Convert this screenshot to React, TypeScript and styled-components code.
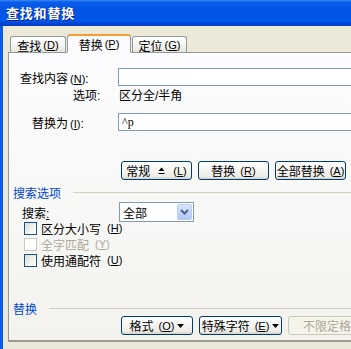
import React from 'react';
import styled, { createGlobalStyle } from 'styled-components';

const GlobalStyle = createGlobalStyle`
  html, body {
    margin: 0;
    padding: 0;
    background: #ece9d8;
    overflow: hidden;
  }
  body {
    font-family: "Liberation Sans", "Noto Sans CJK SC", sans-serif;
    font-size: 12px;
    color: #000;
  }
`;

const Window = styled.div`
  width: 351px;
  height: 349px;
  display: flex;
  flex-direction: column;
  overflow: hidden;
`;

const TitleBar = styled.div`
  height: 26px;
  flex-shrink: 0;
  display: flex;
  align-items: center;
  padding-left: 6px;
  padding-bottom: 2px;
  box-sizing: border-box;
  background: linear-gradient(
    to bottom,
    #3d8bf5 0%,
    #0a5de9 8%,
    #0054e3 40%,
    #0058ea 80%,
    #0046d2 90%,
    #003cc4 100%
  );
`;

const Title = styled.span`
  color: #fff;
  font-weight: bold;
  font-size: 13px;
  letter-spacing: 0.8px;
  text-shadow: 1px 1px 0 #0a1f8a;
`;

const Body = styled.div`
  flex: 1;
  display: flex;
  flex-direction: column;
  border-left: 3px solid #0a5ce8;
  padding: 7px 0 0 5px;
  background: #ece9d8;
`;

const TabStrip = styled.div`
  display: flex;
  align-items: flex-end;
  height: 19px;
  padding-left: 2px;
  position: relative;
  z-index: 1;
`;

const Tab = styled.div<{ $active?: boolean; $w: number }>`
  width: ${p => p.$w}px;
  height: ${p => (p.$active ? 19 : 16)}px;
  box-sizing: border-box;
  display: flex;
  align-items: center;
  justify-content: center;
  border: 1px solid #919b9c;
  border-bottom: ${p => (p.$active ? '1px solid #fcfcfe' : 'none')};
  border-top: ${p => (p.$active ? '2px solid #f0a030' : '1px solid #919b9c')};
  border-radius: 3px 3px 0 0;
  margin-left: ${p => (p.$active ? '1px' : '0')};
  margin-right: ${p => (p.$active ? '1px' : '0')};
  margin-bottom: ${p => (p.$active ? '-1px' : '0')};
  background: ${p =>
    p.$active ? '#fcfcfe' : 'linear-gradient(to bottom, #ffffff 0%, #f3f3ef 60%, #e4e3dc 100%)'};
  font-size: 12px;
  white-space: nowrap;
  padding-top: ${p => (p.$active ? '0' : '1px')};
`;

const Panel = styled.div`
  width: 420px;
  height: 290px;
  box-sizing: border-box;
  border: 1px solid #919b9c;
  border-right: none;
  border-bottom: 2px solid #9a9a92;
  background: linear-gradient(to bottom, #fcfcfe 0%, #f7f7f5 60%, #f3f2ed 100%);
  display: flex;
  flex-direction: column;
`;

const FieldRow = styled.div<{ $top: number; $indent: number }>`
  display: flex;
  align-items: center;
  margin-top: ${p => p.$top}px;
  height: 18px;
  padding-left: ${p => p.$indent}px;
`;

const Label = styled.span<{ $w: number }>`
  width: ${p => p.$w}px;
  flex-shrink: 0;
  white-space: nowrap;
`;

const TextBox = styled.div`
  flex: 1;
  height: 18px;
  box-sizing: border-box;
  border: 1px solid #7f9db9;
  border-right: none;
  background: #fff;
  padding-left: 3px;
  display: flex;
  align-items: center;
  font-family: "Liberation Serif", serif;
  font-size: 12px;
`;

const ButtonRow = styled.div<{ $top: number }>`
  display: flex;
  gap: 6px;
  margin-top: ${p => p.$top}px;
  padding-left: 112px;
`;

const Button = styled.div<{ $w: number; $disabled?: boolean }>`
  width: ${p => p.$w}px;
  height: 19px;
  flex-shrink: 0;
  box-sizing: border-box;
  display: flex;
  align-items: center;
  justify-content: center;
  gap: 3px;
  border: 1px solid ${p => (p.$disabled ? '#c9c7ba' : '#003c74')};
  border-radius: 3px;
  color: ${p => (p.$disabled ? '#aca899' : '#000')};
  background: ${p =>
    p.$disabled
      ? '#f5f4ea'
      : 'linear-gradient(to bottom, #ffffff 0%, #f5f4f0 50%, #ecebe6 85%, #d6d0c5 100%)'};
  white-space: nowrap;
  overflow: hidden;
  font-size: 12px;
`;

const MarkSlot = styled.span`
  display: flex;
  align-items: center;
  margin: 0 3px 0 5px;
`;

const SectionHead = styled.div<{ $top: number }>`
  display: flex;
  align-items: center;
  gap: 12px;
  margin-top: ${p => p.$top}px;
  padding-left: 4px;
  color: #0046d5;
  height: 16px;

  &::after {
    content: '';
    flex: 1;
    height: 1px;
    background: #d0d0bf;
  }
`;

const SearchRow = styled.div`
  display: flex;
  align-items: center;
  margin-top: 2px;
  padding-left: 13px;
  height: 20px;
`;

const Select = styled.div`
  width: 75px;
  height: 20px;
  box-sizing: border-box;
  border: 1px solid #7f9db9;
  background: #fff;
  display: flex;
  align-items: center;
  justify-content: space-between;
  padding: 1px 1px 1px 3px;
`;

const DropButton = styled.div`
  width: 15px;
  height: 16px;
  box-sizing: border-box;
  border: 1px solid #b9cbf3;
  border-radius: 2px;
  background: linear-gradient(to bottom, #d8e4fd 0%, #c1d3fb 60%, #b2c7f7 100%);
  display: flex;
  align-items: center;
  justify-content: center;
`;

const CheckList = styled.div`
  display: flex;
  flex-direction: column;
  gap: 2px;
  margin-top: -1px;
  padding-left: 15px;
`;

const CheckRow = styled.div<{ $disabled?: boolean }>`
  display: flex;
  align-items: center;
  gap: 4px;
  height: 14px;
  color: ${p => (p.$disabled ? '#aca899' : '#000')};
`;

const Box = styled.span<{ $disabled?: boolean }>`
  width: 13px;
  height: 13px;
  box-sizing: border-box;
  border: 1px solid ${p => (p.$disabled ? '#cac8bb' : '#1c5180')};
  background: ${p =>
    p.$disabled ? '#fff' : 'linear-gradient(135deg, #dcdcd7 0%, #f6f6f4 70%, #ffffff 100%)'};
`;

const Key = styled.span`
  font-size: 11px;
  margin-left: 2px;
`;

const K = ({ k }: { k: string }) => (
  <Key>
    (<u>{k}</u>)
  </Key>
);

const Chevron = () => (
  <svg width="9" height="6" viewBox="0 0 9 6">
    <path d="M1 1 L4.5 4.5 L8 1" stroke="#4d6185" strokeWidth="2" fill="none" />
  </svg>
);

const UpMark = () => (
  <svg width="7" height="8" viewBox="0 0 7 8">
    <path d="M3.5 0.5 L6.5 4 L0.5 4 Z" fill="#000" />
    <rect x="0.5" y="6" width="6" height="1" fill="#000" />
  </svg>
);

const DownMark = () => (
  <svg width="7" height="4" viewBox="0 0 7 4">
    <path d="M0 0 L7 0 L3.5 4 Z" fill="#000" />
  </svg>
);

export default function App() {
  return (
    <>
      <GlobalStyle />
      <Window>
        <TitleBar>
          <Title>查找和替换</Title>
        </TitleBar>
        <Body>
          <TabStrip>
            <Tab $w={56}>
              查找<K k="D" />
            </Tab>
            <Tab $w={64} $active>
              替换<K k="P" />
            </Tab>
            <Tab $w={55}>
              定位<K k="G" />
            </Tab>
          </TabStrip>
          <Panel>
            <FieldRow $top={15} $indent={11}>
              <Label $w={98}>
                查找内容<K k="N" />:
              </Label>
              <TextBox />
            </FieldRow>
            <FieldRow $top={-1} $indent={64}>
              <Label $w={46}>选项:</Label>
              <span>区分全/半角</span>
            </FieldRow>
            <FieldRow $top={10} $indent={23}>
              <Label $w={86}>
                替换为<K k="I" />:
              </Label>
              <TextBox>^p</TextBox>
            </FieldRow>
            <ButtonRow $top={30}>
              <Button $w={71}>
                常规
                <MarkSlot>
                  <UpMark />
                </MarkSlot>
                <K k="L" />
              </Button>
              <Button $w={71}>
                替换<K k="R" />
              </Button>
              <Button $w={71}>
                全部替换<K k="A" />
              </Button>
            </ButtonRow>
            <SectionHead $top={4}>搜索选项</SectionHead>
            <SearchRow>
              <Label $w={97}>
                搜索<u>:</u>
              </Label>
              <Select>
                <span>全部</span>
                <DropButton>
                  <Chevron />
                </DropButton>
              </Select>
            </SearchRow>
            <CheckList>
              <CheckRow>
                <Box />
                区分大小写<K k="H" />
              </CheckRow>
              <CheckRow $disabled>
                <Box $disabled />
                全字匹配<K k="Y" />
              </CheckRow>
              <CheckRow>
                <Box />
                使用通配符<K k="U" />
              </CheckRow>
            </CheckList>
            <SectionHead $top={33}>替换</SectionHead>
            <ButtonRow $top={0}>
              <Button $w={72}>
                格式<K k="O" />
                <DownMark />
              </Button>
              <Button $w={83}>
                特殊字符<K k="E" />
                <DownMark />
              </Button>
              <Button $w={90} $disabled>
                不限定格式
              </Button>
            </ButtonRow>
          </Panel>
        </Body>
      </Window>
    </>
  );
}
